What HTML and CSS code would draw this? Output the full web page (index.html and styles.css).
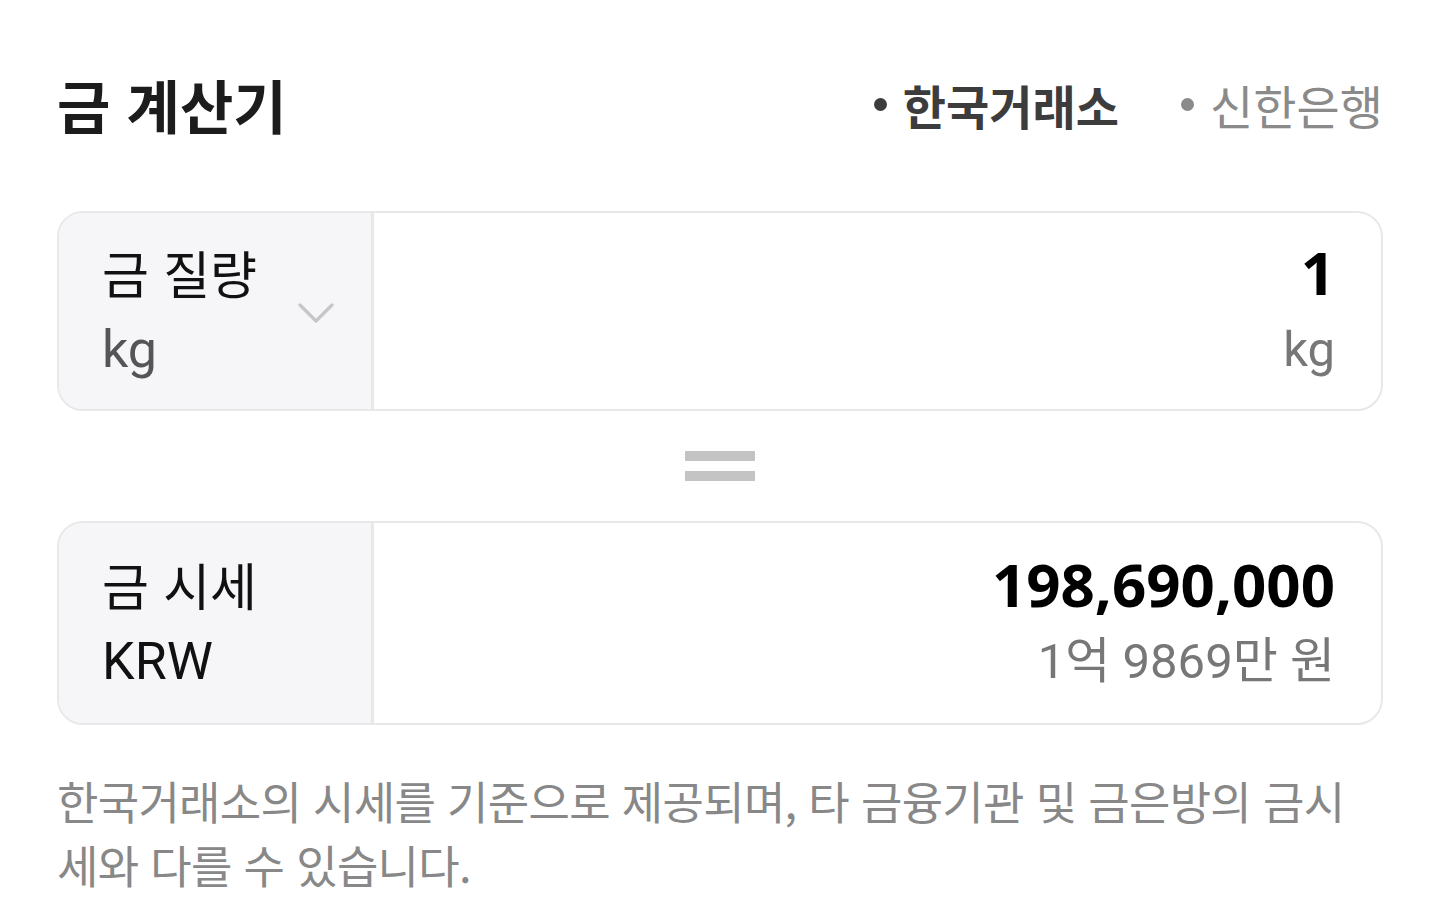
FILE: index.html
```html
<!DOCTYPE html>
<html lang="ko">
<head>
    <meta charset="UTF-8">
    <meta name="viewport" content="width=device-width, initial-scale=1.0">
    <title>금 계산기</title>
    <link rel="stylesheet" href="styles.css">
</head>
<body>
    <main class="calc">
        <div class="calc-header">
            <h1>금 계산기</h1>
            <div class="source-tabs">
                <a href="#" class="tab active">한국거래소</a>
                <a href="#" class="tab">신한은행</a>
            </div>
        </div>

        <div class="field field-weight">
            <div class="field-label">
                <div class="label-text">
                    <span class="label-name">금 질량</span>
                    <span class="label-unit">kg</span>
                </div>
                <svg class="chevron" width="36" height="22" viewBox="0 0 36 22" fill="none">
                    <path d="M2 3 L18 19 L34 3" stroke="#c6c6c9" stroke-width="3.2" stroke-linecap="round" stroke-linejoin="round"/>
                </svg>
            </div>
            <div class="field-value">
                <span class="value-main">1</span>
                <span class="value-sub">kg</span>
            </div>
        </div>

        <div class="equals">
            <span></span>
            <span></span>
        </div>

        <div class="field field-price">
            <div class="field-label">
                <div class="label-text">
                    <span class="label-name">금 시세</span>
                    <span class="label-unit dark">KRW</span>
                </div>
            </div>
            <div class="field-value">
                <span class="value-main">198,690,000</span>
                <span class="value-sub">1억 9869만 원</span>
            </div>
        </div>

        <p class="notice">한국거래소의 시세를 기준으로 제공되며, 타 금융기관 및 금은방의 금시세와 다를 수 있습니다.</p>
    </main>
</body>
</html>
```

FILE: styles.css
```css
body, h1, p {
    margin: 0;
    padding: 0;
}
body {
    font-family: 'Noto Sans', 'Noto Sans CJK KR', sans-serif;
    background-color: #ffffff;
    color: #111111;
}
.calc {
    padding: 72px 57px 0;
}
.calc-header {
    display: flex;
    justify-content: space-between;
    align-items: center;
    height: 64px;
}
.calc-header h1 {
    font-family: 'Noto Sans CJK KR', sans-serif;
    font-size: 58px;
    font-weight: 700;
    color: #1c1c1c;
}
.source-tabs {
    display: flex;
    gap: 62px;
}
.tab {
    display: flex;
    align-items: center;
    font-family: 'Noto Sans CJK KR', sans-serif;
    font-size: 47px;
    color: #8a8a8a;
    text-decoration: none;
}
.tab::before {
    content: '';
    width: 13px;
    height: 13px;
    border-radius: 50%;
    background-color: #8a8a8a;
    margin-right: 16px;
}
.tab.active {
    color: #3c3c3c;
    font-weight: 700;
}
.tab.active::before {
    background-color: #3c3c3c;
}
.field {
    display: grid;
    grid-template-columns: 315px 1fr;
    border: 2px solid #e8e8ea;
    border-radius: 26px;
    overflow: hidden;
}
.field-weight {
    margin-top: 75px;
    height: 196px;
}
.field-price {
    height: 200px;
}
.field-label {
    display: flex;
    justify-content: space-between;
    align-items: center;
    background-color: #f6f6f8;
    border-right: 3px solid #e8e8ea;
    padding: 0 37px 0 43px;
}
.label-text,
.field-value {
    display: flex;
    flex-direction: column;
    justify-content: center;
    gap: 14px;
}
.label-name {
    font-family: 'Noto Sans CJK KR', sans-serif;
    font-size: 51px;
    line-height: 64px;
    color: #111111;
}
.label-unit {
    font-family: 'Roboto', sans-serif;
    font-size: 52px;
    line-height: 64px;
    color: #555555;
}
.label-unit.dark {
    color: #111111;
}
.chevron {
    margin-top: 4px;
}
.field-value {
    align-items: flex-end;
    padding-right: 46px;
}
.value-main {
    font-size: 60px;
    font-weight: 700;
    line-height: 64px;
    color: #000000;
}
.value-sub {
    font-family: 'Roboto', 'Noto Sans CJK KR', sans-serif;
    font-size: 49px;
    line-height: 64px;
    color: #777777;
}
.equals {
    height: 110px;
    display: flex;
    flex-direction: column;
    justify-content: center;
    align-items: center;
    gap: 10px;
}
.equals span {
    width: 70px;
    height: 10px;
    background-color: #c4c4c4;
}
.notice {
    margin-top: 44px;
    font-family: 'Noto Sans CJK KR', sans-serif;
    font-size: 45px;
    line-height: 64px;
    color: #888888;
    letter-spacing: -0.7px;
}
```
